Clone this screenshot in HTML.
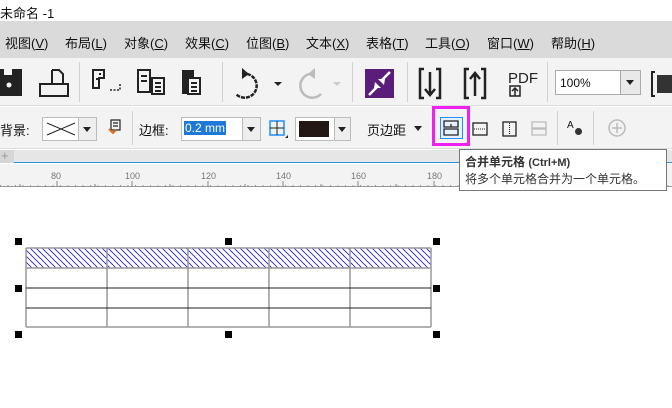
<!DOCTYPE html><html><head><meta charset="utf-8"><style>
*{margin:0;padding:0;box-sizing:border-box}
body{width:672px;height:408px;overflow:hidden;background:#fff;position:relative;font-family:"Liberation Sans","Noto Sans CJK SC",sans-serif;font-size:13px;color:#111}
.a{position:absolute}
.menu span{position:absolute;top:33px;font-size:13px}
.sep{position:absolute;width:1px;background:#d0d0d0}
.tl{position:absolute;font-size:9px;color:#777;top:171px}
.h{position:absolute;width:7px;height:7px;background:#000}
</style></head><body>
<div class="a" style="left:0;top:3px;font-size:13px">未命名 -1</div>
<div class="a" style="left:0;top:21px;width:672px;height:37px;background:#dadada"></div>
<div class="menu">
<span style="left:5px">视图(<u>V</u>)</span><span style="left:65px">布局(<u>L</u>)</span><span style="left:124px">对象(<u>C</u>)</span><span style="left:185px">效果(<u>C</u>)</span><span style="left:246px">位图(<u>B</u>)</span><span style="left:306px">文本(<u>X</u>)</span><span style="left:366px">表格(<u>T</u>)</span><span style="left:425px">工具(<u>O</u>)</span><span style="left:487px">窗口(<u>W</u>)</span><span style="left:551px">帮助(<u>H</u>)</span>
</div>
<div class="a" style="left:0;top:58px;width:672px;height:48px;background:#f3f3f3;border-bottom:1px solid #ddd"></div>
<div class="a" style="left:0;top:107px;width:672px;height:42px;background:#f3f3f3;border-bottom:1px solid #ddd"></div>
<svg class="a" style="left:0;top:60px" width="672" height="45">
<rect x="0" y="9" width="22" height="27" fill="#222"/><rect x="4" y="9" width="8" height="6" fill="#f3f3f3"/><circle cx="9" cy="25" r="2.5" fill="#f3f3f3"/>
<path d="M52 10h7l4 4v10 M52 10v14 M40 24h28v12H40z" fill="none" stroke="#222" stroke-width="2"/>
<path d="M93 10h11v8h-5v10h-6z M99 14h2 M96 19h2" fill="none" stroke="#222" stroke-width="2"/><path d="M110 30h10v-6" fill="none" stroke="#222" stroke-width="1.5" stroke-dasharray="2 1.5"/>
<path d="M138 10h12v22h-12z M152 18h12v16h-12z M141 16h6M141 21h6M155 23h6M155 27h6M155 31h6" fill="none" stroke="#222" stroke-width="2"/>
<rect x="182" y="10" width="12" height="24" fill="#222"/><rect x="188" y="18" width="12" height="16" fill="#f3f3f3" stroke="#222" stroke-width="2"/><path d="M191 23h6M191 27h6M191 31h6" stroke="#222" stroke-width="2"/>
<path d="M242 14a12 12 0 1 1 -6 20" fill="none" stroke="#222" stroke-width="2.5" stroke-dasharray="4 1"/><path d="M242 8l7 6-7 5z" fill="#222"/><path d="M274 22l4 4 4-4z" fill="#222"/>
<path d="M315 14a12 12 0 1 0 6 20" fill="none" stroke="#bbb" stroke-width="2.5"/><path d="M315 8l-7 6 7 5z" fill="#bbb"/><path d="M333 22l4 4 4-4z" fill="#ccc"/>
<rect x="365" y="9" width="29" height="29" fill="#5a1d7a"/><path d="M369 35l8-8M390 12l-8 8" stroke="#fff" stroke-width="2.5"/><path d="M375 22l6 6h-7zM384 25l-6-6h7z" fill="#fff"/>
<path d="M424 9h-4v29h4M436 9h4v29h-4M430 12v22M425 29l5 6 5-6" fill="none" stroke="#222" stroke-width="2.5"/>
<path d="M469 9h-4v29h4M481 9h4v29h-4M475 14v22M470 19l5-6 5 6" fill="none" stroke="#222" stroke-width="2.5"/>
<text x="508" y="23" font-family="Liberation Sans" font-size="15" fill="#222">PDF</text><path d="M510 26h10v10h-10zM515 36v-8M512 31l3-3 3 3" fill="none" stroke="#222" stroke-width="1.5"/>
<path d="M655 12h-3v24h3" fill="none" stroke="#222" stroke-width="2"/><rect x="657" y="15" width="15" height="18" fill="#333"/>
</svg>
<div class="sep" style="left:79px;top:62px;height:40px"></div><div class="sep" style="left:222px;top:62px;height:40px"></div><div class="sep" style="left:352px;top:62px;height:40px"></div><div class="sep" style="left:407px;top:62px;height:40px"></div><div class="sep" style="left:547px;top:62px;height:40px"></div>
<div class="a" style="left:555px;top:70px;width:86px;height:25px;background:#fff;border:1px solid #aaa"><span style="position:absolute;left:4px;top:5px;font-size:12px">100%</span><div style="position:absolute;right:0;top:0;width:20px;height:23px;background:#e9e9e9;border-left:1px solid #aaa"></div><div style="position:absolute;right:6px;top:9px;border:4px solid transparent;border-top:5px solid #222"></div></div>
<div class="a" style="left:0;top:120px">背景:</div>
<div class="a" style="left:42px;top:117px;width:55px;height:24px;background:#fff;border:1px solid #bbb"><svg width="35" height="22"><path d="M4 5l28 12M4 17l28-12" stroke="#222"/></svg><div style="position:absolute;right:0;top:0;width:18px;height:22px;background:#eee;border-left:1px solid #bbb"></div><div style="position:absolute;right:5px;top:9px;border:4px solid transparent;border-top:5px solid #222"></div></div>
<svg class="a" style="left:106px;top:117px" width="16" height="18"><path d="M5 3h9v10h-9z M7 6h5M7 9h5" fill="none" stroke="#222" stroke-width="1.2"/><path d="M3 12l4 4 3-3" stroke="#e07020" fill="none" stroke-width="2"/></svg>
<div class="sep" style="left:132px;top:111px;height:34px"></div>
<div class="a" style="left:139px;top:120px">边框:</div>
<div class="a" style="left:181px;top:117px;width:80px;height:24px;background:#fff;border:1px solid #bbb"><span style="position:absolute;left:2px;top:3px;background:#1e78d7;color:#fff;font-size:12px;padding:0 1px">0.2 mm</span><div style="position:absolute;right:0;top:0;width:18px;height:22px;background:#eee;border-left:1px solid #bbb"></div><div style="position:absolute;right:5px;top:9px;border:4px solid transparent;border-top:5px solid #222"></div></div>
<svg class="a" style="left:269px;top:119px" width="20" height="20"><rect x="1" y="2" width="14" height="14" fill="none" stroke="#1e90ff" stroke-width="1.5"/><path d="M8 2v14M1 9h14" stroke="#222"/><path d="M16 19h3v-3z" fill="#222"/></svg>
<div class="a" style="left:295px;top:117px;width:56px;height:24px;background:#fff;border:1px solid #bbb"><div style="position:absolute;left:3px;top:3px;width:30px;height:16px;background:#231815"></div><div style="position:absolute;right:0;top:0;width:16px;height:22px;background:#eee;border-left:1px solid #bbb"></div><div style="position:absolute;right:4px;top:9px;border:4px solid transparent;border-top:5px solid #222"></div></div>
<div class="a" style="left:367px;top:120px">页边距</div>
<div class="a" style="left:414px;top:126px;border:4px solid transparent;border-top:5px solid #222"></div>
<div class="a" style="left:432px;top:106px;width:38px;height:40px;border:3px solid #f020f0"></div>
<div class="a" style="left:440px;top:117px;width:23px;height:22px;border:1px solid #1e90ff;background:#e6f1fb"></div>
<svg class="a" style="left:440px;top:117px" width="120" height="24"><path d="M4 4h14v6h-14zM4 12h14v6h-14zM11 7v3" fill="none" stroke="#222" stroke-width="1.3"/>
<rect x="33" y="6" width="14" height="12" fill="none" stroke="#222" stroke-width="1.3"/><path d="M34 12h12" stroke="#222" stroke-dasharray="1 1"/>
<rect x="63" y="5" width="13" height="14" fill="none" stroke="#222" stroke-width="1.3"/><path d="M69.5 6v12" stroke="#222" stroke-dasharray="1 1"/>
<path d="M92 5h14v6h-14zM92 12h14v6h-14z" fill="none" stroke="#bbb" stroke-width="1.3"/></svg>
<div class="sep" style="left:557px;top:111px;height:34px"></div>
<div class="a" style="left:567px;top:120px;font-size:10px">A</div><div class="a" style="left:575px;top:128px;width:7px;height:7px;border-radius:50%;border:2px dotted #333;background:#333"></div>
<div class="sep" style="left:593px;top:111px;height:34px"></div>
<svg class="a" style="left:607px;top:118px" width="20" height="20"><circle cx="10" cy="10" r="8" fill="none" stroke="#bbb" stroke-width="1.5"/><path d="M10 5v10M5 10h10" stroke="#bbb" stroke-width="1.5"/></svg>
<div class="a" style="left:0;top:150px;width:672px;height:13px;background:#e6e6e6;border-bottom:1px solid #2b8fd8"></div>
<div class="a" style="left:0;top:150px;width:14px;height:13px;background:#d6d6d6;color:#999;font-size:13px;line-height:12px;padding-left:1px">+</div>
<div class="a" style="left:0;top:164px;width:672px;height:23px;background:#f3f3f3;border-bottom:1px solid #999"></div>
<div class="tl" style="left:51px">80</div><div class="tl" style="left:125px">100</div><div class="tl" style="left:201px">120</div><div class="tl" style="left:276px">140</div><div class="tl" style="left:351px">160</div><div class="tl" style="left:427px">180</div>
<svg class="a" style="left:0;top:176px" width="672" height="11">
<g stroke="#888"><path d="M57 5v6M132 5v6M208 5v6M283 5v6M358 5v6M434 5v6M20 8v3M95 8v3M170 8v3M245 8v3M321 8v3M396 8v3M471 8v3"/></g>
<path d="M0 9.5H672" stroke="#999" stroke-width="1" stroke-dasharray="1 6.5"/></svg>
<svg class="a" style="left:0;top:230px" width="460" height="110">
<defs><pattern id="p" width="6" height="6" patternUnits="userSpaceOnUse"><path d="M-1 -1l8 8M-7 -1l8 8M5 -1l8 8" stroke="#1a1ae0" stroke-width="0.8"/></pattern></defs>
<rect x="26" y="18" width="405" height="20" fill="url(#p)"/>
<g stroke="#999" stroke-width="1.5"><path d="M26 18h405M26 38h405M26 97h405M26 18v79M107 18v79M188 18v79M269 18v79M350 18v79M431 18v79"/></g>
<g stroke="#222"><path d="M26 58h405M26 78h405"/></g>
</svg>
<div class="h" style="left:15px;top:238px"></div><div class="h" style="left:225px;top:238px"></div><div class="h" style="left:433px;top:238px"></div>
<div class="h" style="left:15px;top:285px"></div><div class="h" style="left:433px;top:285px"></div>
<div class="h" style="left:15px;top:331px"></div><div class="h" style="left:225px;top:331px"></div><div class="h" style="left:433px;top:331px"></div>
<div class="a" style="left:459px;top:149px;width:208px;height:42px;background:#fff;border:1px solid #777;padding:4px 0 0 5px;font-size:12px;line-height:16px;color:#333"><b>合并单元格</b> <b style="font-size:11px">(Ctrl+M)</b><br>将多个单元格合并为一个单元格。</div>
</body></html>
